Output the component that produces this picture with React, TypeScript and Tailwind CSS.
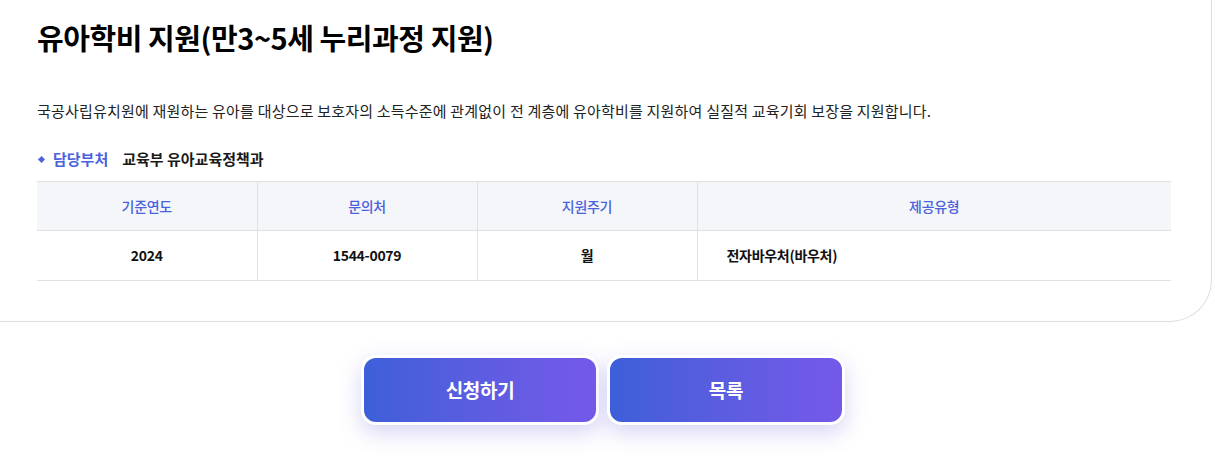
import React from "react";

const font = { fontFamily: '"Noto Sans CJK KR", "Noto Sans", sans-serif' };

const headers = ["기준연도", "문의처", "지원주기", "제공유형"];

export default function App() {
  return (
    <div className="w-[1215px] h-[464px] bg-white overflow-hidden" style={font}>
      {/* detail card, top and left run off the screen */}
      <div className="mr-[3px] pt-[17px] pl-[37px] pr-[40px] pb-[40px] border-r border-b border-[#dedede] rounded-br-[42px]">
        <h1 className="text-[29px] leading-[40px] font-bold tracking-[-0.45px] text-black">
          유아학비 지원(만3~5세 누리과정 지원)
        </h1>

        <p className="mt-[43px] text-[15px] leading-[22px] text-[#222] tracking-[0.2px]">
          국공사립유치원에 재원하는 유아를 대상으로 보호자의 소득수준에 관계없이 전 계층에 유아학비를 지원하여 실질적 교육기회 보장을 지원합니다.
        </p>

        <div className="mt-[26px] flex items-center text-[15px] leading-[22px]">
          <span className="w-[5px] h-[5px] bg-[#4a63dc] rotate-45 ml-[2px] mr-[9px]" />
          <span className="font-semibold text-[#4a63dc]">담당부처</span>
          <span className="ml-[14px] font-semibold text-[#1a1a1a]">교육부 유아교육정책과</span>
        </div>

        <table className="mt-[11px] w-[1134px] border-collapse text-[14px] tracking-[-0.3px]">
          <thead>
            <tr className="bg-[#f5f6fa] border-t border-b border-[#e1e1e1]">
              {headers.map((h, i) => (
                <th
                  key={h}
                  className={`h-[49px] font-medium text-[#4a63dc] ${i < 3 ? "w-[220px] border-r border-[#e1e1e1]" : ""}`}
                >
                  {h}
                </th>
              ))}
            </tr>
          </thead>
          <tbody>
            <tr className="border-b border-[#e1e1e1]">
              <td className="h-[50px] text-center font-semibold text-[#111] border-r border-[#e1e1e1]">2024</td>
              <td className="text-center font-semibold text-[#111] border-r border-[#e1e1e1]">1544-0079</td>
              <td className="text-center font-semibold text-[#111] border-r border-[#e1e1e1]">월</td>
              <td className="pl-[29px] text-left font-semibold text-[#111]">전자바우처(바우처)</td>
            </tr>
          </tbody>
        </table>
      </div>

      <div className="mt-[33px] flex gap-[8px] pl-[361px]">
        <button className="w-[238px] h-[70px] rounded-[15px] border-[3px] border-white bg-gradient-to-r from-[#3d5fd9] to-[#7559e9] text-white text-[19px] font-bold tracking-[-0.3px] shadow-[0_8px_22px_rgba(110,100,220,0.28)]">
          신청하기
        </button>
        <button className="w-[238px] h-[70px] rounded-[15px] border-[3px] border-white bg-gradient-to-r from-[#3d5fd9] to-[#7559e9] text-white text-[19px] font-bold tracking-[-0.3px] shadow-[0_8px_22px_rgba(110,100,220,0.28)]">
          목록
        </button>
      </div>
    </div>
  );
}
